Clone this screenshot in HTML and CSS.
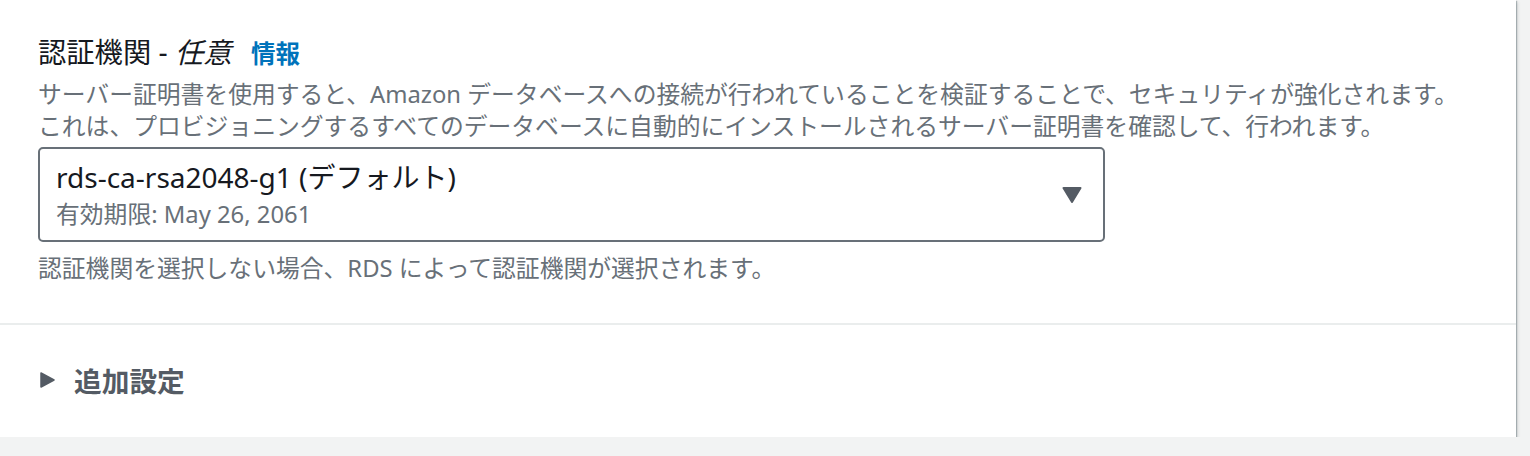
FILE: index.html
```html
<!DOCTYPE html>
<html lang="ja">
<head>
  <meta charset="UTF-8" />
  <title>認証機関</title>
  <link rel="stylesheet" href="styles.css">
</head>
<body>

<div class="card">
  <div class="field">
    <div class="label">
      認証機関 - <i>任意</i>
      <a class="info" href="#">情報</a>
    </div>
    <p class="desc">
      サーバー証明書を使用すると、Amazon データベースへの接続が行われていることを検証することで、セキュリティが強化されます。<br>
      これは、プロビジョニングするすべてのデータベースに自動的にインストールされるサーバー証明書を確認して、行われます。
    </p>

    <div class="select">
      <div class="select-text">
        <div class="select-value">rds-ca-rsa2048-g1 (デフォルト)</div>
        <div class="select-sub">有効期限: May 26, 2061</div>
      </div>
      <svg class="caret" width="20" height="16" viewBox="0 0 20 16">
        <path d="M1.5 1 H18.5 L10 15 Z" fill="#545b64" stroke="#545b64" stroke-width="2" stroke-linejoin="round"/>
      </svg>
    </div>

    <p class="hint">認証機関を選択しない場合、RDS によって認証機関が選択されます。</p>
  </div>

  <div class="expander">
    <svg class="arrow" width="15" height="16" viewBox="0 0 15 16">
      <path d="M1 1 L14 8 L1 15 Z" fill="#545b64" stroke="#545b64" stroke-width="1.5" stroke-linejoin="round"/>
    </svg>
    <span>追加設定</span>
  </div>
</div>

</body>
</html>
```

FILE: styles.css
```css
* {
  margin: 0;
  padding: 0;
  box-sizing: border-box;
}

body {
  background: #f2f3f3;
  font-family: "Noto Sans", "Noto Sans CJK JP", sans-serif;
  color: #16191f;
}

.card {
  width: 1516px;
  height: 437px;
  background: white;
  box-shadow: 0 1px 0 0 rgba(0, 28, 36, 0.45), 1px 1px 1px 0 rgba(0, 28, 36, 0.25), 2px 2px 3px 0 rgba(0, 28, 36, 0.12);
}

.field {
  height: 325px;
  padding: 34px 38px 0;
  border-bottom: 2px solid #eaeded;
}

.label {
  font-size: 28.3px;
  line-height: 36px;
  color: #16191f;
}

.label i {
  font-style: italic;
}

.info {
  margin-left: 12px;
  font-size: 24.5px;
  font-weight: bold;
  color: #0073bb;
  text-decoration: none;
}

.desc {
  margin-top: 6px;
  font-size: 23.8px;
  line-height: 32px;
  color: #687078;
}

.select {
  display: flex;
  align-items: center;
  justify-content: space-between;
  width: 1067px;
  height: 95px;
  margin-top: 5px;
  padding: 11px 21px 10px 16px;
  border: 2px solid #687078;
  border-radius: 5px;
}

.select-value {
  font-size: 28px;
  line-height: 32px;
  color: #16191f;
}

.select-sub {
  margin-top: 5px;
  font-size: 23.8px;
  line-height: 32px;
  color: #687078;
}

.caret {
  margin-top: -1px;
}

.hint {
  margin-top: 10px;
  font-size: 23.8px;
  line-height: 32px;
  color: #687078;
}

.expander {
  display: flex;
  align-items: center;
  height: 110px;
  padding-left: 40px;
  font-size: 27.7px;
  font-weight: bold;
  color: #545b64;
}

.expander .arrow {
  margin-right: 19px;
}
```
